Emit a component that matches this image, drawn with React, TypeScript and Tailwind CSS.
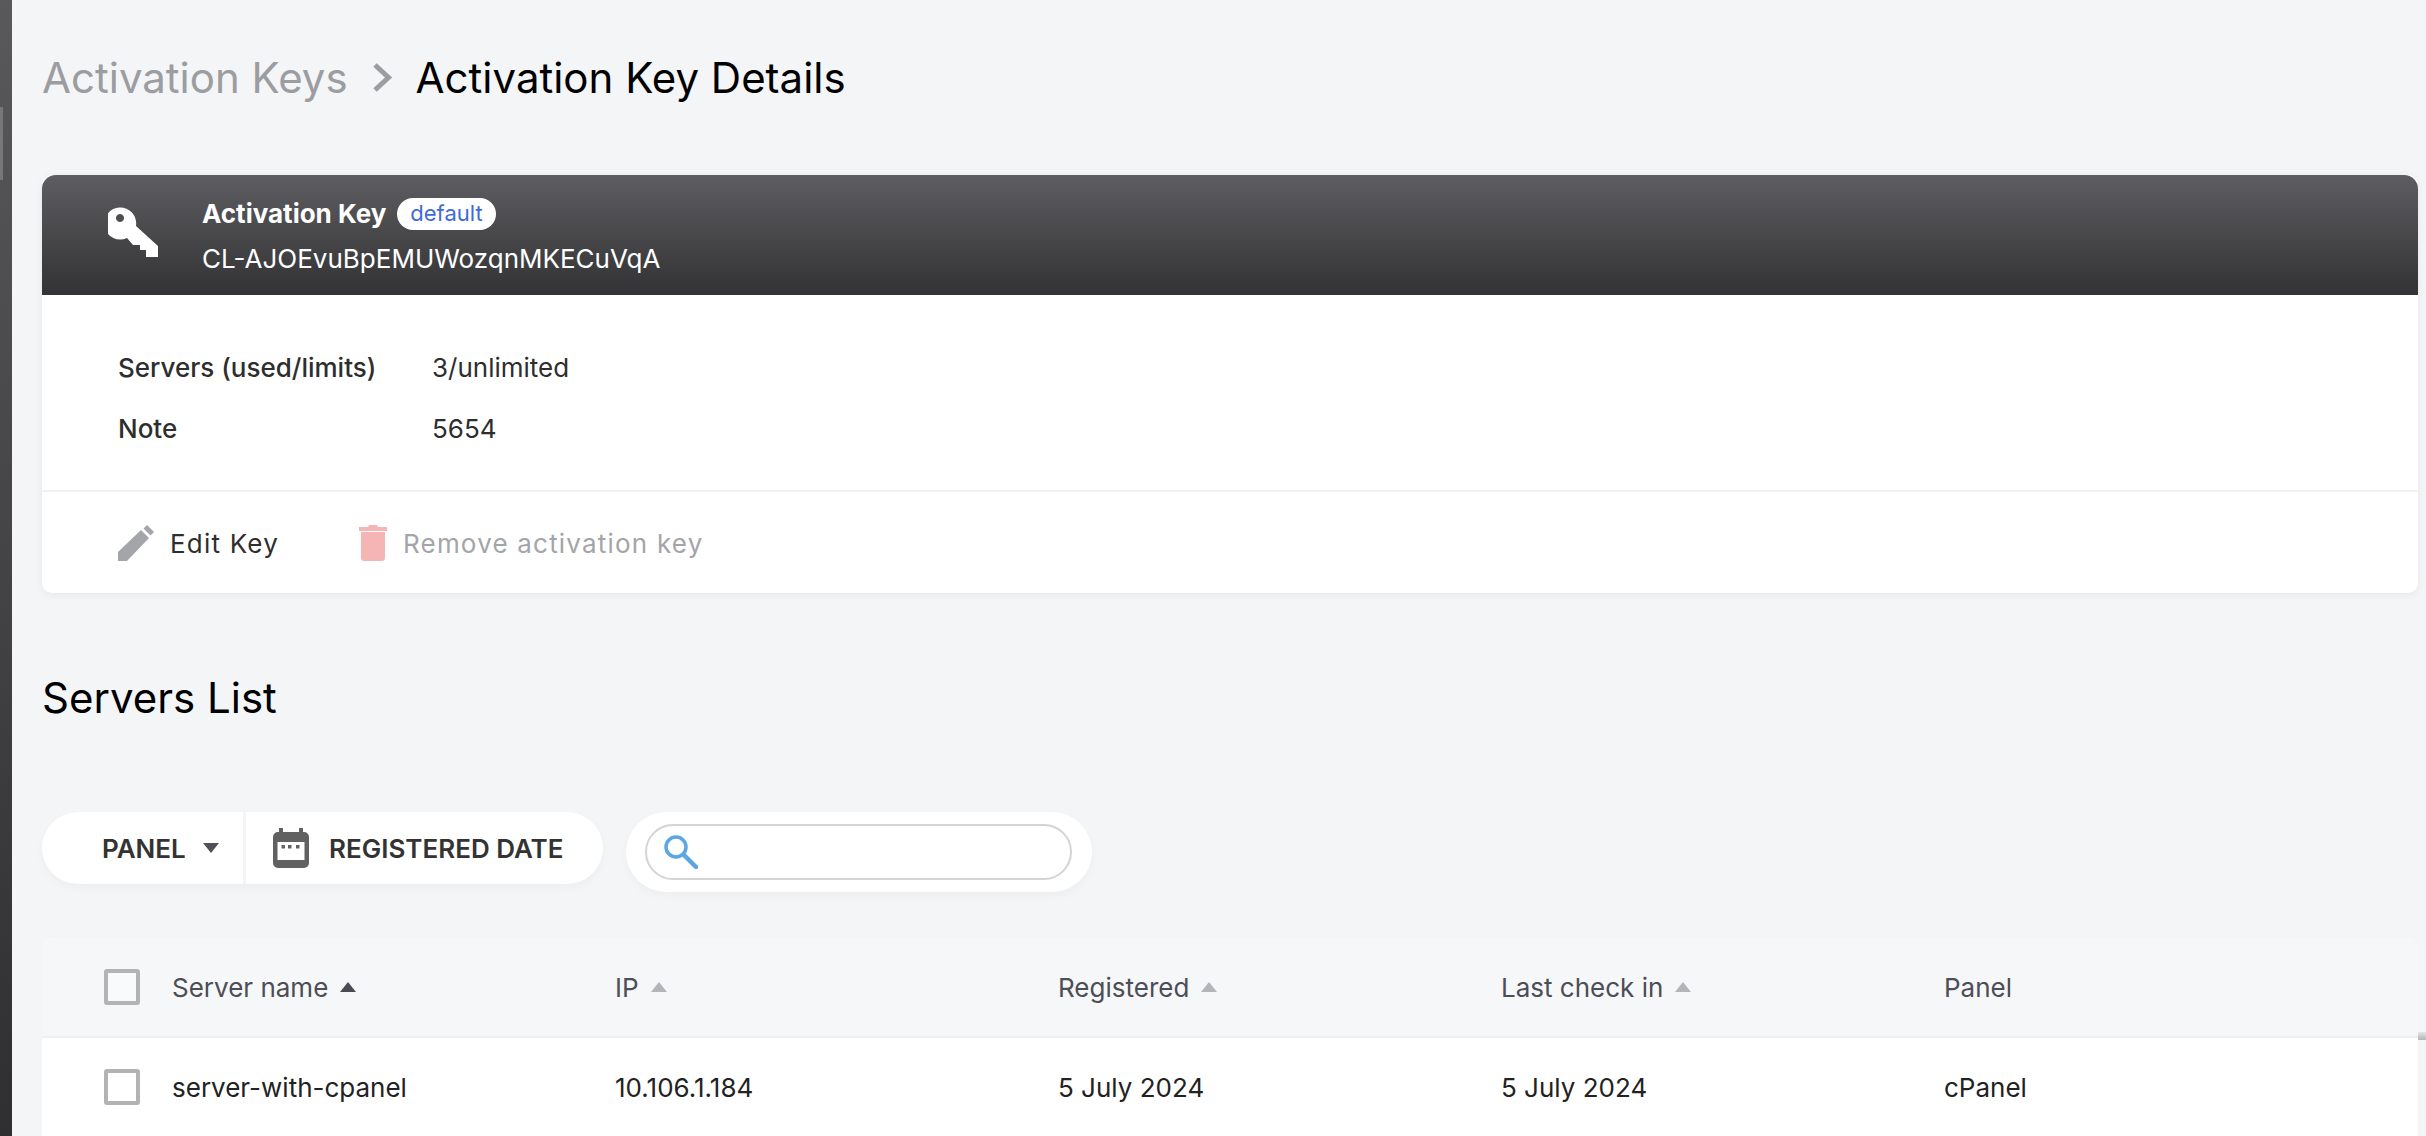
const font = "font-['Inter','Liberation_Sans',sans-serif]";

const KeyIcon = () => (
  <svg viewBox="0 0 50 51" className="w-[50px] h-[51px]" fill="white">
    <path
      fillRule="evenodd"
      d="M28 19 L50 39 V50 H38 V43 H32 V38 H25 L19 31 A16 16 0 1 1 28 19 Z M12 7 A4 4 0 1 0 12.01 7 Z"
    />
  </svg>
);

const PencilIcon = () => (
  <svg viewBox="0 0 36 36" className="w-[36px] h-[36px]" fill="#a3a5a8">
    <path d="M0 27 L23 5 L31 13 L9 36 H0 Z" />
    <path d="M25.5 3.5 L29 0 L36 7 L32.5 10.5 Z" />
  </svg>
);

const TrashIcon = () => (
  <svg viewBox="0 0 28 36" className="w-[28px] h-[36px]" fill="#f5b5b5">
    <path d="M2 7h24v26a3 3 0 0 1-3 3H5a3 3 0 0 1-3-3V7zM0 2h9l1-2h8l1 2h9v4H0V2z" />
  </svg>
);

const CalendarIcon = () => (
  <svg viewBox="0 0 36 40" className="w-[36px] h-[40px]" fill="#616161">
    <path
      fillRule="evenodd"
      d="M6 0h4v4h16V0h4v4h1a5 5 0 0 1 5 5v26a5 5 0 0 1-5 5H5a5 5 0 0 1-5-5V9a5 5 0 0 1 5-5h1V0zM4.500 14v18h27V14h-27z"
    />
    <path d="M8.500 17h3.500v3.500H8.500zM15 17h3.500v3.500H15zM23 17h3.500v3.500H23z" />
  </svg>
);

const SearchIcon = () => (
  <svg viewBox="0 0 34 34" className="w-[34px] h-[34px]" fill="none" stroke="#5aa7e6">
    <circle cx="12" cy="12" r="10" strokeWidth="3.5" />
    <path d="M20 20 L32 32" strokeWidth="4.5" strokeLinecap="round" />
  </svg>
);

const SortArrow = ({ dark }: { dark?: boolean }) => (
  <span
    className={`ml-3 w-0 h-0 border-x-[8px] border-x-transparent border-b-[10px] ${
      dark ? "border-b-[#4a4b55]" : "border-b-[#b4b5b8]"
    }`}
  />
);

const Checkbox = () => <span className="w-[36px] h-[36px] border-[4px] border-[#b3b3b3] rounded-[3px] bg-white/40" />;

const columns = [
  { name: "IP", value: "10.106.1.184", sort: true },
  { name: "Registered", value: "5 July 2024", sort: true },
  { name: "Last check in", value: "5 July 2024", sort: true },
  { name: "Panel", value: "cPanel", sort: false },
];

export default function App() {
  return (
    <div className={`relative flex h-[1136px] w-[2426px] overflow-hidden bg-[#f4f5f7] ${font}`}>
      <div className="relative w-[12px] shrink-0 bg-gradient-to-b from-[#59595c] to-[#2f2f31]">
        <div className="absolute left-0 top-[107px] h-[73px] w-[3px] bg-[#77777a]" />
      </div>

      <div className="flex-1 min-w-0 pl-[30px] pr-[8px]">
        <div className="flex items-center h-[175px] pb-[20px] text-[42px] leading-none">
          <span className="text-[#9b9da0]">Activation Keys</span>
          <svg viewBox="0 0 21 31" className="w-[21px] h-[31px] ml-[25px] mr-[22px]" fill="none" stroke="#9b9da0" strokeWidth="5">
            <path d="M2 3 L15.500 15.500 L2 28" />
          </svg>
          <span className="text-black">Activation Key Details</span>
        </div>

        <div className="h-[418px] rounded-[10px] bg-white shadow-[0_2px_8px_rgba(0,0,0,0.06)]">
          <div className="flex h-[120px] items-center rounded-t-[14px] bg-gradient-to-b from-[#5e5e62] to-[#333335] text-white">
            <div className="ml-[66px] mb-[5px] w-[50px] shrink-0">
              <KeyIcon />
            </div>
            <div className="ml-[44px]">
              <div className="flex items-center h-[40px]">
                <span className="text-[26px] font-bold">Activation Key</span>
                <span className="ml-[11px] flex h-[32px] items-center rounded-full bg-white px-[13px] text-[22px] text-[#3f6ad8]">
                  default
                </span>
              </div>
              <div className="mt-[7px] text-[26px] leading-[36px]">CL-AJOEvuBpEMUWozqnMKECuVqA</div>
            </div>
          </div>

          <div className="h-[197px] pl-[76px] pt-[52px] text-[26px] text-[#2e2e2e] border-b-2 border-[#f1f2f3]">
            <div className="flex h-[40px] items-center">
              <span className="w-[314px] font-medium">Servers (used/limits)</span>
              <span>3/unlimited</span>
            </div>
            <div className="mt-[21px] flex h-[40px] items-center">
              <span className="w-[314px] font-medium">Note</span>
              <span>5654</span>
            </div>
          </div>

          <div className="flex h-[100px] items-center pl-[76px] pt-[2px] text-[26px] tracking-[1.2px]">
            <PencilIcon />
            <span className="ml-[16px] text-[#2e2e2e]">Edit Key</span>
            <span className="ml-[80px]">
              <TrashIcon />
            </span>
            <span className="ml-[16px] text-[#a3a5a8]">Remove activation key</span>
          </div>
        </div>

        <div className="flex h-[210px] mb-[9px] items-center text-[42px] leading-none text-black">Servers List</div>

        <div className="flex items-start gap-[23px] h-[126px]">
          <div className="flex h-[72px] w-[561px] rounded-full bg-white shadow-[0_4px_10px_rgba(0,0,0,0.03)] text-[26px] font-semibold text-[#333]">
            <div className="flex w-[204px] items-center border-r-[3px] border-[#f4f5f7] pl-[60px]">
              PANEL
              <span className="ml-[17px] w-0 h-0 border-x-[8px] border-x-transparent border-t-[10px] border-t-[#4f5058]" />
            </div>
            <div className="flex items-center pl-[27px]">
              <CalendarIcon />
              <span className="ml-[20px]">REGISTERED DATE</span>
            </div>
          </div>

          <div className="flex h-[80px] w-[466px] items-center rounded-full bg-white px-[19px] shadow-[0_4px_10px_rgba(0,0,0,0.03)]">
            <div className="flex h-[56px] w-[427px] items-center rounded-full border-2 border-[#d4d4d4] pl-[17px]">
              <SearchIcon />
            </div>
          </div>
        </div>

        <div className="overflow-hidden rounded-t-[10px] bg-white">
          <div className="flex h-[100px] items-center border-b-2 border-[#eeeff0] bg-[#f6f7f8] text-[26px] text-[#4c4d57]">
            <div className="flex w-[573px] items-center pl-[62px]">
              <Checkbox />
              <span className="ml-[32px]">Server name</span>
              <SortArrow dark />
            </div>
            {columns.map((col) => (
              <div key={col.name} className="flex w-[443px] items-center">
                <span>{col.name}</span>
                {col.sort && <SortArrow />}
              </div>
            ))}
          </div>
          <div className="flex h-[98px] items-center text-[26px] text-[#222]">
            <div className="flex w-[573px] items-center pl-[62px]">
              <Checkbox />
              <span className="ml-[32px]">server-with-cpanel</span>
            </div>
            {columns.map((col) => (
              <div key={col.name} className="w-[443px]">
                {col.value}
              </div>
            ))}
          </div>
        </div>
      </div>

      <div className="absolute right-0 top-[1032px] h-[8px] w-[8px] bg-gradient-to-b from-[#e6e6e8] to-[#b4b4b6]" />
    </div>
  );
}
